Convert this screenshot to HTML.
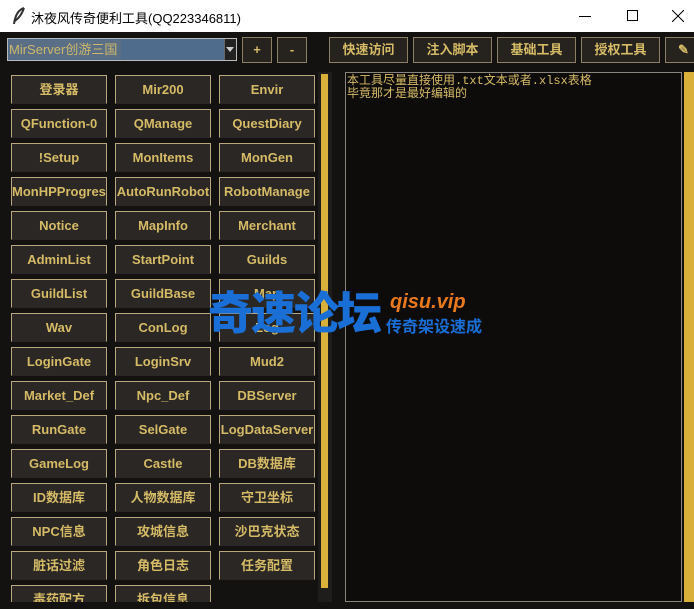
<!DOCTYPE html>
<html><head><meta charset="utf-8"><style>
*{margin:0;padding:0;box-sizing:border-box}
body{width:694px;height:609px;background:#141210;position:relative;overflow:hidden;font-family:"Liberation Sans","Noto Sans CJK SC",sans-serif}
.title{position:absolute;left:0;top:0;width:694px;height:32px;background:#fff;color:#000;font-size:13px}
.title .t{position:absolute;left:31px;top:8px}
.b{position:absolute;width:96px;height:29px;background:#2a2724;border:1px solid #b9a77f;border-bottom-color:#2a2724;color:#d6bb67;font-weight:bold;font-size:13px;text-align:center;line-height:27px;white-space:nowrap;overflow:hidden}
.tb{position:absolute;top:37px;height:26px;background:#26231f;border:1px solid #8c7f66;color:#d6bb67;font-weight:bold;font-size:13px;text-align:center;line-height:24px}
</style></head><body>
<div class="title">
<svg style="position:absolute;left:12px;top:7px" width="14" height="18" viewBox="0 0 14 18"><path d="M12 1 C6 3 3 9 2 17 M12 1 C10 7 7 11 3 14" stroke="#333" stroke-width="2" fill="none"/></svg>
<span class="t">沐夜风传奇便利工具(QQ223346811)</span>
<div style="position:absolute;left:579px;top:16px;width:12px;height:1px;background:#000"></div>
<div style="position:absolute;left:627px;top:10px;width:11px;height:11px;border:1px solid #000"></div>
<svg style="position:absolute;left:672px;top:10px" width="12" height="12"><path d="M0 0L12 12M12 0L0 12" stroke="#000" stroke-width="1"/></svg>
</div>
<div style="position:absolute;left:7px;top:38px;width:230px;height:23px;border:1px solid #bbb;background:#4f6c8c"></div>
<div style="position:absolute;left:9px;top:40px;height:19px;width:112px;background:#5a6f85;color:#cdb76c;font-size:13px;line-height:19px;white-space:nowrap">MirServer创游三国</div>
<div style="position:absolute;left:224px;top:39px;width:12px;height:21px;background:#222;border-left:1px solid #666"></div>
<div style="position:absolute;left:226px;top:47px;border:4px solid transparent;border-top:5px solid #ccc"></div>
<div class="tb" style="left:242px;width:30px;top:37px">+</div>
<div class="tb" style="left:277px;width:30px">-</div>
<div class="tb" style="left:329px;width:79px">快速访问</div>
<div class="tb" style="left:413px;width:79px">注入脚本</div>
<div class="tb" style="left:497px;width:79px">基础工具</div>
<div class="tb" style="left:581px;width:79px">授权工具</div>
<div class="tb" style="left:665px;width:40px;text-align:left;padding-left:12px">✎</div>
<div style="position:absolute;left:318px;top:72px;width:14px;height:530px;background:#1f1d1b"></div>
<div style="position:absolute;left:321px;top:74px;width:7px;height:514px;background:#d9b13a"></div>
<div style="position:absolute;left:345px;top:72px;width:337px;height:530px;background:#0e0c0b;border:1px solid #8a857c;color:#d6bb67;font-family:'Liberation Mono','Noto Sans CJK SC',monospace;font-size:12px;line-height:13px;padding:2px 0 0 1px">本工具尽量直接使用.txt文本或者.xlsx表格<br>毕竟那才是最好编辑的</div>
<div style="position:absolute;left:684px;top:72px;width:10px;height:530px;background:#d9b13a"></div>
<div id="g" style="position:absolute;left:0;top:0;width:318px;height:602px;overflow:hidden"></div>
<div style="position:absolute;left:208px;top:282px;color:#1a6fd6;font-size:45px;font-weight:900;letter-spacing:-2px;font-family:'Noto Sans CJK SC',sans-serif;line-height:56px">奇速论坛</div>
<div style="position:absolute;left:390px;top:290px;color:#e8791c;font-size:20px;font-weight:bold;font-style:italic;line-height:24px">qisu.vip</div>
<div style="position:absolute;left:386px;top:316px;color:#1a6fd6;font-size:16px;font-weight:bold;font-family:'Noto Sans CJK SC',sans-serif;line-height:18px">传奇架设速成</div>
<script>
var L=[["登录器","Mir200","Envir"],["QFunction-0","QManage","QuestDiary"],["!Setup","MonItems","MonGen"],["MonHPProgress","AutoRunRobot","RobotManage"],["Notice","MapInfo","Merchant"],["AdminList","StartPoint","Guilds"],["GuildList","GuildBase","Map"],["Wav","ConLog","Log"],["LoginGate","LoginSrv","Mud2"],["Market_Def","Npc_Def","DBServer"],["RunGate","SelGate","LogDataServer"],["GameLog","Castle","DB数据库"],["ID数据库","人物数据库","守卫坐标"],["NPC信息","攻城信息","沙巴克状态"],["脏话过滤","角色日志","任务配置"],["毒药配方","拆包信息",""]];
var h="",X=[11,115,219];
L.forEach(function(r,i){r.forEach(function(t,j){if(t)h+='<div class="b" style="left:'+X[j]+'px;top:'+(75+34*i)+'px">'+t+'</div>';});});
document.getElementById("g").innerHTML=h;
</script>
</body></html>
